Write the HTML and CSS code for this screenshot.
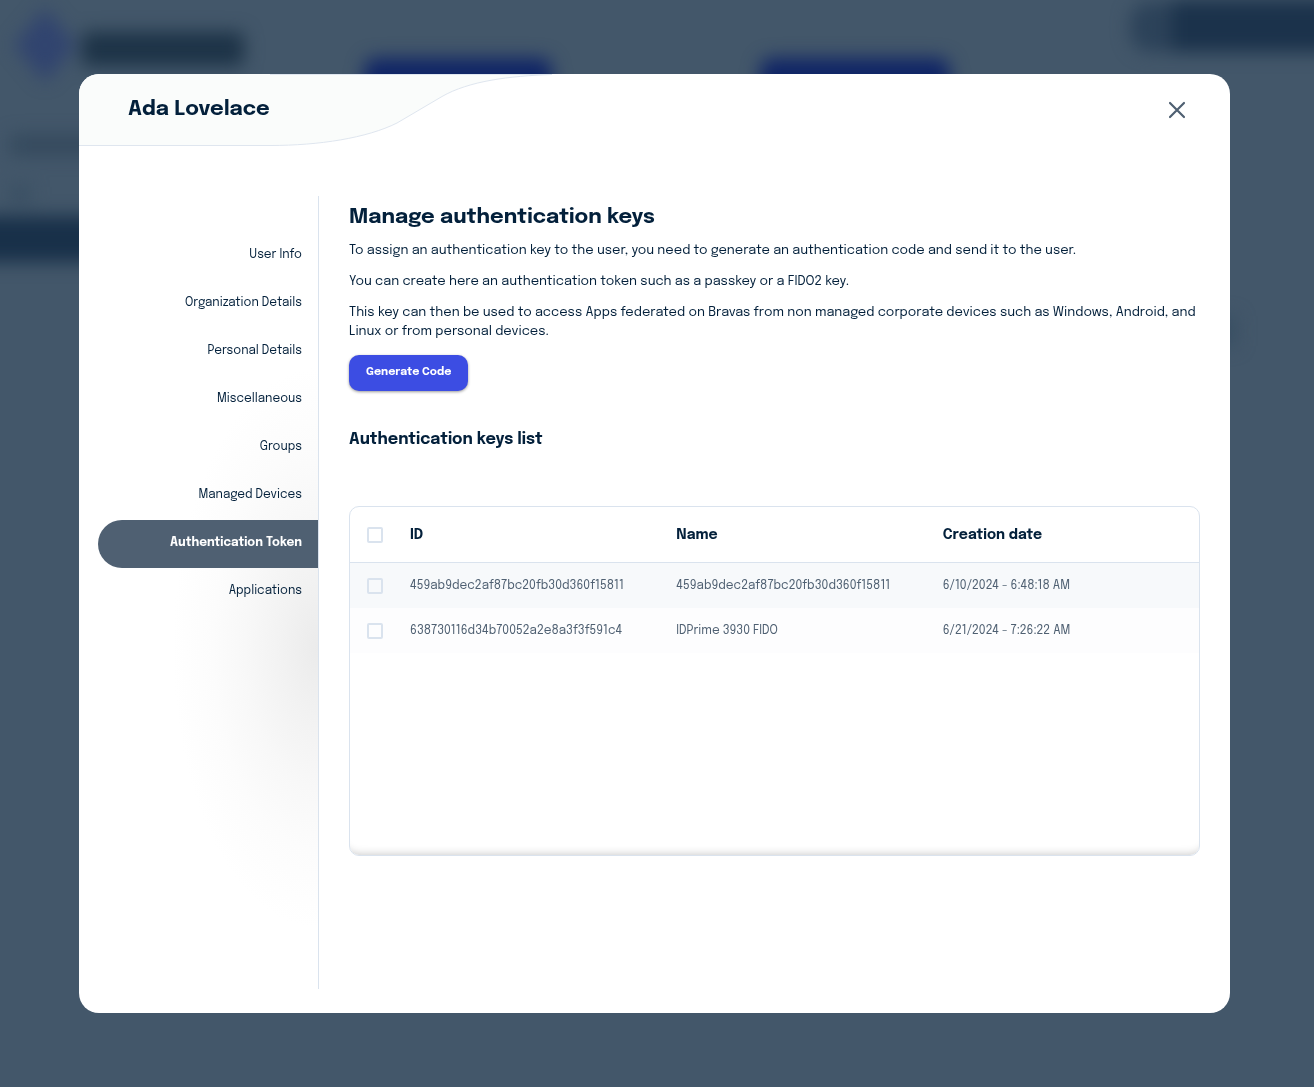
FILE: index.html
```html
<!DOCTYPE html>
<html lang="en">
<head>
  <meta charset="utf-8">
  <meta name="viewport" content="width=device-width, initial-scale=1">
  <title>Ada Lovelace</title>
  <link rel="stylesheet" href="styles.css">
</head>
<body>
  <svg class="backdrop" viewBox="0 0 1314 1087" preserveAspectRatio="xMinYMin slice" aria-hidden="true">
    <defs>
      <filter id="soft" filterUnits="userSpaceOnUse" x="-100" y="-100" width="1520" height="1290" color-interpolation-filters="sRGB"><feGaussianBlur stdDeviation="9"/></filter>
    </defs>
    <g filter="url(#soft)">
      <path d="M45 8 L76 45 L45 82 L14 45 Z" fill="#31446f"/>
      <rect x="82" y="32" width="162" height="34" rx="6" fill="#1d3347"/>
      <rect x="364" y="58" width="188" height="50" rx="12" fill="#102566"/>
      <rect x="760" y="58" width="190" height="50" rx="12" fill="#102566"/>
      <rect x="1130" y="2" width="60" height="50" rx="20" fill="#2c4259"/>
      <rect x="1172" y="0" width="190" height="52" fill="#1b324b"/>
      <rect x="10" y="135" width="120" height="20" fill="#34495d"/>
      <rect x="10" y="186" width="20" height="16" fill="#384e62"/>
      <rect x="-60" y="216" width="200" height="46" fill="#183049"/>
      <rect x="1180" y="316" width="56" height="30" fill="#384e62"/>
    </g>
  </svg>

  <main class="modal" role="dialog" aria-labelledby="user-name">
    <header class="modal-header">
      <svg class="swoosh" width="480" height="72" viewBox="0 0 480 72" aria-hidden="true">
        <path d="M0 0 H473 C430 2 390 7 363 22.500 L318 49 C288 64 240 71.500 191 71.500 H0 Z" fill="#fafcfb"/>
        <path d="M191 .5 H473 C430 2 390 7 363 22.500 L318 49 C288 64 240 71.500 191 71.500 H0" fill="none" stroke="#dfe6ef"/>
      </svg>
      <h1 class="title" id="user-name">Ada Lovelace</h1>
      <button class="close" type="button" aria-label="Close">
        <svg width="18" height="18" viewBox="0 0 18 18" aria-hidden="true">
          <path d="M2 2 L16 16 M16 2 L2 16" fill="none" stroke="#4f6072" stroke-width="2.200" stroke-linecap="round"/>
        </svg>
      </button>
    </header>

    <div class="modal-body">
      <nav class="sidebar" aria-label="User sections">
        <a class="nav-link" href="#info">User Info</a>
        <a class="nav-link" href="#organization">Organization Details</a>
        <a class="nav-link" href="#personal">Personal Details</a>
        <a class="nav-link" href="#misc">Miscellaneous</a>
        <a class="nav-link" href="#groups">Groups</a>
        <a class="nav-link" href="#devices">Managed Devices</a>
        <a class="nav-link active" href="#token" aria-current="page">Authentication Token</a>
        <a class="nav-link" href="#applications">Applications</a>
      </nav>

      <section class="content">
        <h2 class="heading">Manage authentication keys</h2>
        <div class="intro">
          <p>To assign an authentication key to the user, you need to generate an authentication code and send it to the user.</p>
          <p>You can create here an authentication token such as a passkey or a FIDO2 key.</p>
          <p>This key can then be used to access Apps federated on Bravas from non managed corporate devices such as Windows, Android, and Linux or from personal devices.</p>
        </div>
        <button class="primary" type="button">Generate Code</button>
        <h3 class="subheading">Authentication keys list</h3>

        <div class="table-box">
          <table class="keys">
            <thead>
              <tr>
                <th class="check" scope="col"><input type="checkbox" aria-label="Select all keys"></th>
                <th scope="col">ID</th>
                <th scope="col">Name</th>
                <th scope="col">Creation date</th>
              </tr>
            </thead>
            <tbody>
              <tr>
                <td class="check"><input type="checkbox" aria-label="Select key 459ab9dec2af87bc20fb30d360f15811"></td>
                <td>459ab9dec2af87bc20fb30d360f15811</td>
                <td>459ab9dec2af87bc20fb30d360f15811</td>
                <td>6/10/2024 - 6:48:18 AM</td>
              </tr>
              <tr>
                <td class="check"><input type="checkbox" aria-label="Select key IDPrime 3930 FIDO"></td>
                <td>638730116d34b70052a2e8a3f3f591c4</td>
                <td>IDPrime 3930 FIDO</td>
                <td>6/21/2024 - 7:26:22 AM</td>
              </tr>
            </tbody>
          </table>
        </div>
      </section>
    </div>
  </main>
</body>
</html>
```
FILE: styles.css
```css
* {
  box-sizing: border-box;
}

body {
  margin: 0;
  min-height: 100vh;
  padding: 74px 84px 74px 79px;
  display: flex;
  background: #43576a;
  color: #03203b;
  font-family: Epilogue, Inter, "Liberation Sans", sans-serif;
  font-size: 13px;
  line-height: 19px;
}

h1, h2, h3, p {
  margin: 0;
}

.backdrop {
  position: fixed;
  inset: 0;
  width: 100%;
  height: 100%;
}

.modal {
  position: relative;
  flex: 1;
  min-width: 0;
  display: flex;
  flex-direction: column;
  overflow: hidden;
  border-radius: 20px;
  background: #fff;
}

.modal-header {
  position: relative;
  height: 72px;
  padding: 0 44px 0 49px;
  display: flex;
  align-items: center;
  justify-content: space-between;
}

.swoosh {
  position: absolute;
  top: 0;
  left: 0;
}

.title {
  position: relative;
  padding-bottom: 2px;
  font-size: 21px;
  line-height: 28px;
  font-weight: 700;
}

.close {
  display: flex;
  padding: 0;
  border: 0;
  background: none;
  cursor: pointer;
}

.modal-body {
  flex: 1;
  display: grid;
  grid-template-columns: 240px minmax(0, 1fr);
  padding: 50px 30px 24px 0;
}

.sidebar {
  padding: 36px 0 0 19px;
  border-right: 1px solid #dae3ee;
  background: radial-gradient(145px 280px at 100% 57%, #ebebeb, #f2f2f2 25%, #f8f8f8 50%, #fcfcfc 72%, #fff);
}

.nav-link {
  display: flex;
  align-items: center;
  justify-content: flex-end;
  height: 48px;
  padding: 0 16px 2px;
  color: inherit;
  font-size: 12px;
  text-decoration: none;
}

.nav-link.active {
  border-radius: 24px 0 0 24px;
  background: #4f6072;
  color: #fff;
  font-weight: 700;
}

.content {
  padding: 7px 0 0 30px;
}

.heading {
  font-size: 21px;
  line-height: 28px;
  font-weight: 700;
}

.intro {
  display: grid;
  gap: 12px;
  margin: 10px 0 14px;
}

.primary {
  display: block;
  height: 36px;
  padding: 0 17px 2px;
  border: 0;
  border-radius: 10px;
  background: #3c4de3;
  box-shadow: 0 1px 3px rgba(0, 0, 0, .4);
  color: #fff;
  font: inherit;
  font-size: 11px;
  font-weight: 700;
  cursor: pointer;
}

.subheading {
  margin: 37px 0 54px;
  font-size: 16px;
  line-height: 24px;
  font-weight: 700;
}

.table-box {
  min-height: 350px;
  overflow: hidden;
  border: 1px solid #dae3ee;
  border-radius: 10px;
  box-shadow: inset 0 -10px 10px -10px rgba(0, 0, 0, .24);
}

.keys {
  width: 100%;
  border-collapse: separate;
  border-spacing: 0;
  table-layout: fixed;
}

.keys th,
.keys td {
  padding: 2px 0 0 10px;
  text-align: left;
}

.keys th {
  height: 56px;
  border-bottom: 1px solid #dae3ee;
  font-size: 14px;
}

.keys td {
  height: 45px;
  color: #4f6072;
  font-size: 12px;
}

.keys tbody tr {
  background: #fdfdfe;
}

.keys tbody tr:first-child {
  background: #f7f9fb;
}

.keys .check {
  width: 50px;
  padding: 1px 0 0 17px;
}

.keys input {
  display: block;
  appearance: none;
  width: 16px;
  height: 16px;
  margin: 0;
  border: 2px solid #dae3ee;
  border-radius: 2px;
}
```
